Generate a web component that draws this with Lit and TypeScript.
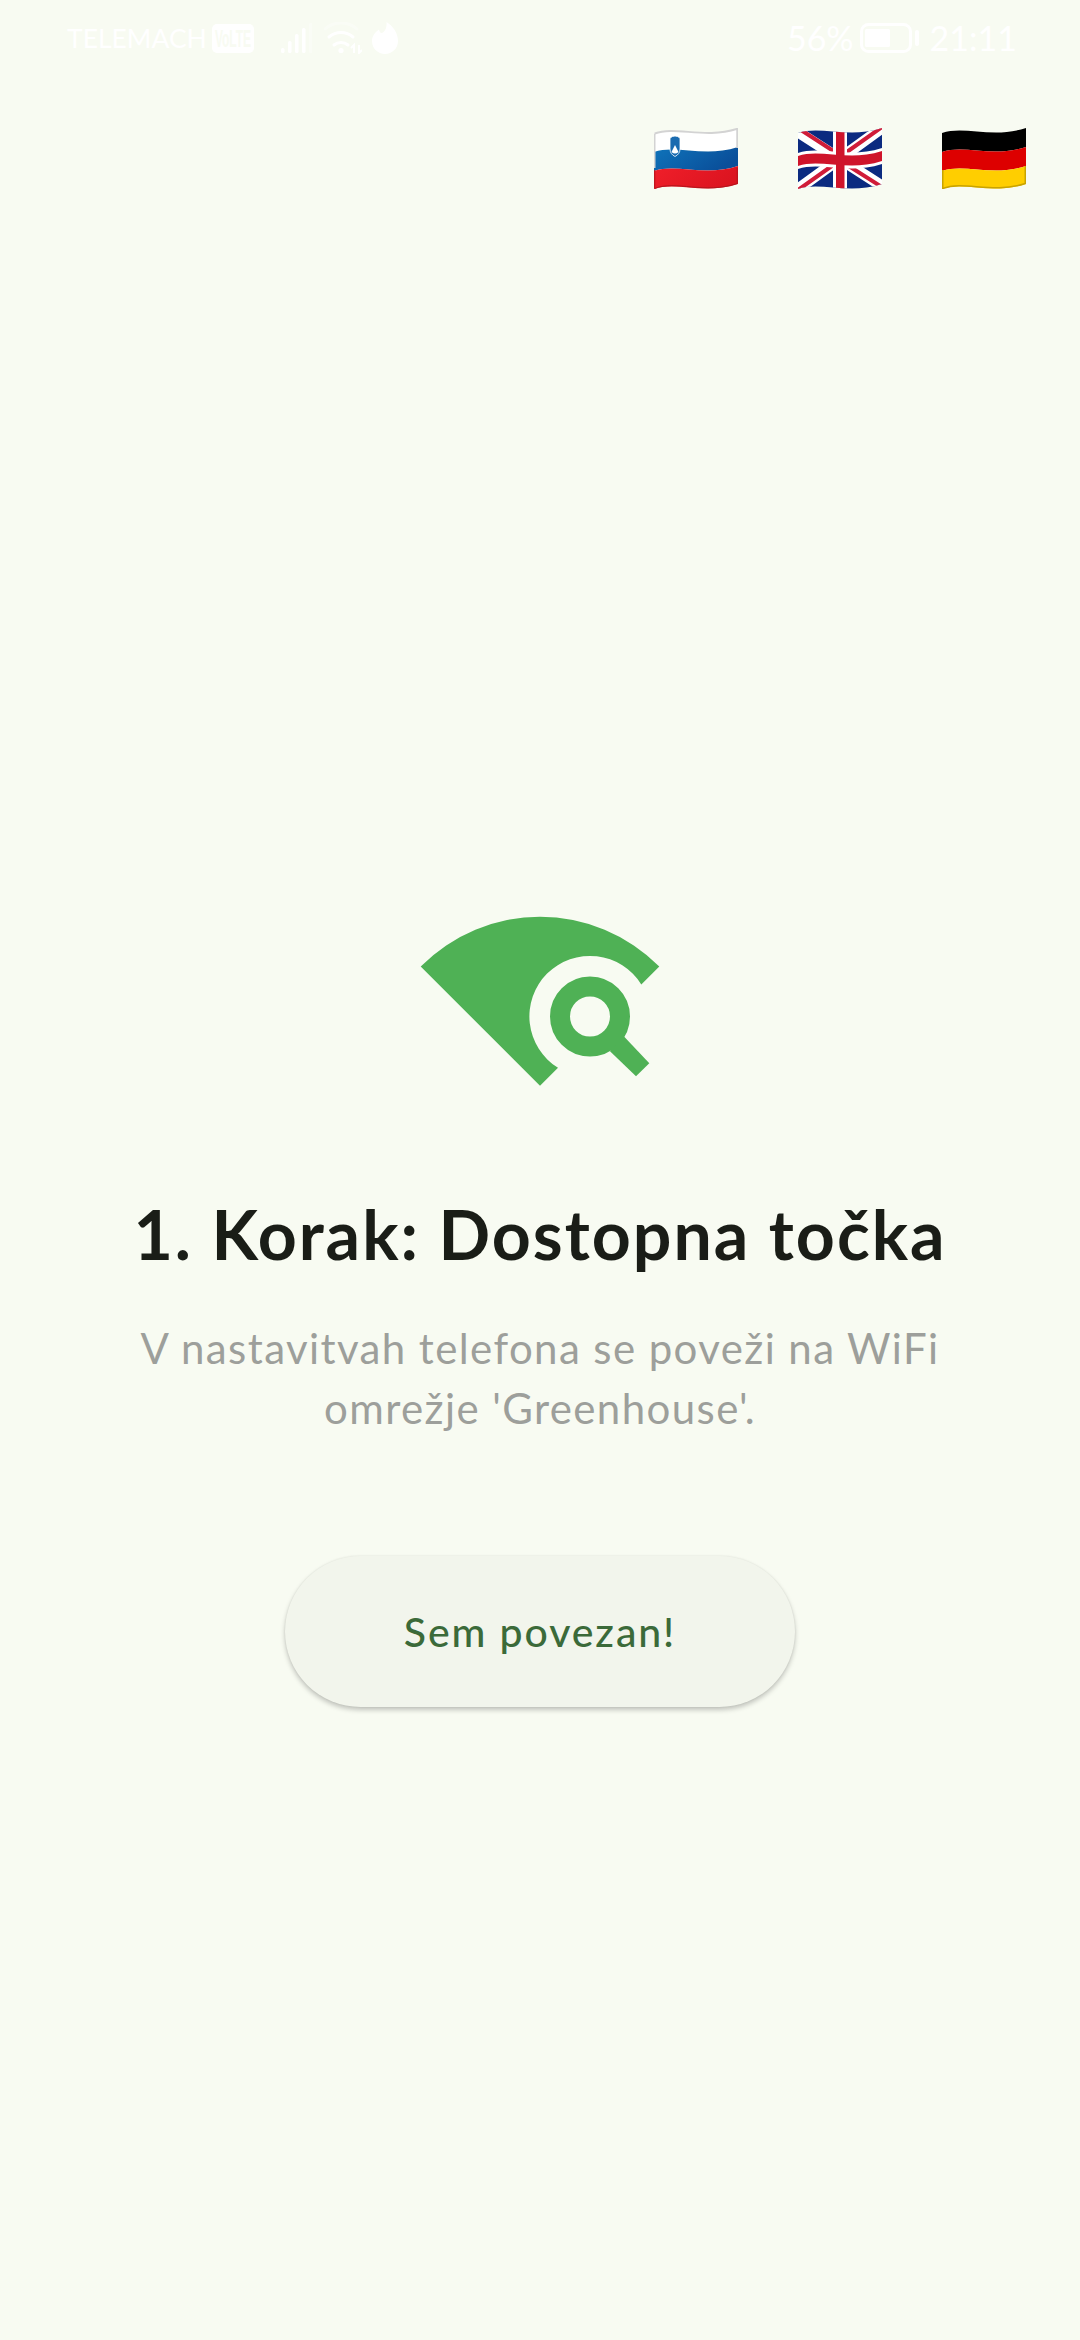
import { LitElement, html, css, svg } from "lit";
import { customElement } from "lit/decorators.js";

const band = (y0: number, y1: number, fill: string) =>
  svg`<path d="M0 ${y0 + 5} C22 ${y0 - 3} 50 ${y0 + 11} 84 ${y0} V${y1} C50 ${y1 + 11} 22 ${y1 - 3} 0 ${y1 + 5} Z" fill="${fill}"/>`;

@customElement("app-root")
export class AppRoot extends LitElement {
  static styles = css`
    :host {
      display: block;
      width: 1080px;
      height: 2340px;
      background: #f8fbf2;
      font-family: "Lato", "Liberation Sans", sans-serif;
      overflow: hidden;
    }
    .status {
      height: 78px;
      display: flex;
      justify-content: space-between;
      align-items: flex-start;
      padding: 22px 63px 0 67px;
      box-sizing: border-box;
      color: #fff;
    }
    .group {
      display: flex;
      align-items: center;
      height: 32px;
    }
    .carrier {
      font-size: 26.5px;
      line-height: 32px;
      margin-right: 5px;
    }
    .volte {
      display: block;
      margin-right: 27px;
    }
    .signal { display: block; margin-right: 12px; }
    .wifi { display: block; margin-right: 10px; }
    .flame { display: block; }
    .pct, .time {
      font-size: 34px;
      line-height: 32px;
      font-weight: 400;
    }
    .battery { display: block; margin: 0 11px 0 6px; }
    .flags {
      display: flex;
      justify-content: flex-end;
      gap: 60px;
      padding: 50px 54px 0 0;
    }
    .flags svg { display: block; }
    .main {
      display: flex;
      flex-direction: column;
      align-items: center;
      padding-top: 727px;
    }
    .icon { display: block; }
    h1 {
      margin: 103px 0 0;
      font-size: 68px;
      line-height: 90px;
      font-weight: 700;
      color: #1a1d17;
      letter-spacing: 2px;
      white-space: nowrap;
    }
    p {
      margin: 39px 0 0;
      font-size: 42px;
      line-height: 60px;
      font-weight: 400;
      letter-spacing: 1.4px;
      color: #9d9f9b;
      text-align: center;
    }
    button {
      margin-top: 118px;
      width: 510px;
      height: 151px;
      border: none;
      border-radius: 76px;
      background: #f2f5ec;
      color: #3b6a39;
      font-family: inherit;
      font-size: 41px;
      font-weight: 500;
      letter-spacing: 1.9px;
      box-shadow: 0 3px 5px rgba(0, 0, 0, 0.22), 0 0 2px rgba(0, 0, 0, 0.08);
      padding: 0;
    }
  `;

  render() {
    return html`
      <div class="status">
        <div class="group">
          <span class="carrier">TELEMACH</span>
          <svg class="volte" width="42" height="29" viewBox="0 0 42 29">
            <rect width="42" height="29" rx="5" fill="#fff"/>
            <text transform="scale(1 2)" x="21" y="11.5" text-anchor="middle" font-size="12" font-weight="700" fill="#f8fbf2" font-family="Liberation Sans">VoLTE</text>
          </svg>
          <svg class="signal" width="31" height="30" viewBox="0 0 31 30" fill="#fff">
            <rect x="0" y="25" width="3.5" height="5" rx="1.5"/>
            <rect x="7" y="18" width="3.5" height="12" rx="1.5"/>
            <rect x="14" y="11" width="3.5" height="19" rx="1.5"/>
            <rect x="21" y="5" width="3.5" height="25" rx="1.5"/>
            <rect x="28" y="0" width="3.5" height="30" rx="1.5" opacity=".35"/>
          </svg>
          <svg class="wifi" width="38" height="32" viewBox="0 0 38 32" fill="none" stroke="#fff" stroke-width="3" stroke-linecap="round">
            <path d="M1 7 C10 -1 24 -1 33 7" opacity=".35"/>
            <path d="M5 15 C12 9 22 9 29 15"/>
            <path d="M10 23 C14 19.5 20 19.5 24 23"/>
            <circle cx="17" cy="28.5" r="2.6" fill="#fff" stroke="none"/>
            <path d="M30 31 V23 L27 26 M35 23 V31 L38 28" stroke-width="2" stroke-linecap="butt"/>
          </svg>
          <svg class="flame" width="26" height="32" viewBox="0 0 26 32" fill="#fff">
            <path d="M14.5 0 C15 5 13.5 9 10 11 C8.5 11.5 7.5 10 7 7.5 C2.5 10.5 0 14.5 0 19 C0 26.5 6 32 13 32 C20 32 26 26.5 26 19 C26 11 21 4 14.5 0 Z"/>
          </svg>
        </div>
        <div class="group">
          <span class="pct">56%</span>
          <svg class="battery" width="59" height="30" viewBox="0 0 59 30">
            <rect x="1.5" y="1.5" width="49" height="27" rx="7" fill="none" stroke="#fff" stroke-width="3"/>
            <rect x="5" y="6" width="25" height="18" rx="1.5" fill="#fff"/>
            <rect x="55" y="7" width="4" height="16" rx="2" fill="#fff"/>
          </svg>
          <span class="time">21:11</span>
        </div>
      </div>

      <div class="flags">
        <svg width="84" height="61" viewBox="0 0 84 61">
          <defs>
            <linearGradient id="siblue" x1="0" y1="0" x2="1" y2="0.4">
              <stop offset="0" stop-color="#0f74bb"/>
              <stop offset="1" stop-color="#0a4f9a"/>
            </linearGradient>
            <linearGradient id="sired" x1="0" y1="0" x2="1" y2="0.3">
              <stop offset="0" stop-color="#f01f2a"/>
              <stop offset="1" stop-color="#dc1420"/>
            </linearGradient>
          </defs>
          ${band(0, 19, "#ffffff")}
          ${band(19, 38, "url(#siblue)")}
          ${band(38, 56, "url(#sired)")}
          <path d="M0.75 5.5 C22 -2.5 50 11.5 83.25 0.8 V20" fill="none" stroke="#d3d3d3" stroke-width="2"/>
          <path d="M0.75 5.5 V40" fill="none" stroke="#d3d3d3" stroke-width="1.5"/>
          <path d="M0.75 42 V60.5 C22 52 50 66.5 83.25 55.5 V40" fill="none" stroke="#b2151d" stroke-width="1"/>
          <path d="M16 10 Q21 6 26 10 V21 Q26 26 21 28.5 Q16 26 16 21 Z" fill="#1a6bb0" stroke="#fff" stroke-width=".8"/>
          <path d="M17.5 24 L21 17 L24.5 24 Q21 27 17.5 24 Z" fill="#fff"/>
        </svg>
        <svg width="84" height="61" viewBox="0 0 84 61">
          <defs>
            <clipPath id="uk"><path d="M0 5 C22 -3 50 11 84 0 V56 C50 67 22 53 0 61 Z"/></clipPath>
          </defs>
          <g clip-path="url(#uk)">
            <rect width="84" height="61" fill="#0b2a80"/>
            <path d="M0 4 L84 58 M84 0 L0 61" stroke="#fff" stroke-width="11"/>
            <path d="M0 0 L40 26 M46 35 L84 59 M84 -1 L46 26 M38 35 L0 62" stroke="#d01c39" stroke-width="4"/>
            <rect x="35" y="0" width="14" height="61" fill="#fff"/>
            ${band(20, 36, "#fff")}
            <rect x="38" y="0" width="8.5" height="61" fill="#cf142b"/>
            ${band(23, 33, "#cf142b")}
          </g>
        </svg>
        <svg width="84" height="61" viewBox="0 0 84 61">
          ${band(0, 19, "#000000")}
          ${band(19, 38, "#dd0000")}
          ${band(38, 56, "#ffce00")}
          <path d="M0.75 42 V60.5 C22 52 50 66.5 83.25 55.5 V38" fill="none" stroke="#c9a300" stroke-width="1.5"/>
        </svg>
      </div>

      <div class="main">
        <svg class="icon" width="240" height="170" viewBox="420 915.5 240 170" fill="#4fb155">
          <path d="M420.7 966 A168 168 0 0 1 659.3 966 L641.3 984 A60.5 60.5 0 1 0 558 1067.3 L540 1085.3 Z"/>
          <circle cx="590" cy="1016" r="30" fill="none" stroke="#4fb155" stroke-width="20"/>
          <path d="M624 1036 L649.3 1062.7 L636 1075.7 L610 1050.7 Z"/>
        </svg>
        <h1>1. Korak: Dostopna točka</h1>
        <p>V nastavitvah telefona se poveži na WiFi<br />omrežje 'Greenhouse'.</p>
        <button>Sem povezan!</button>
      </div>
    `;
  }
}
